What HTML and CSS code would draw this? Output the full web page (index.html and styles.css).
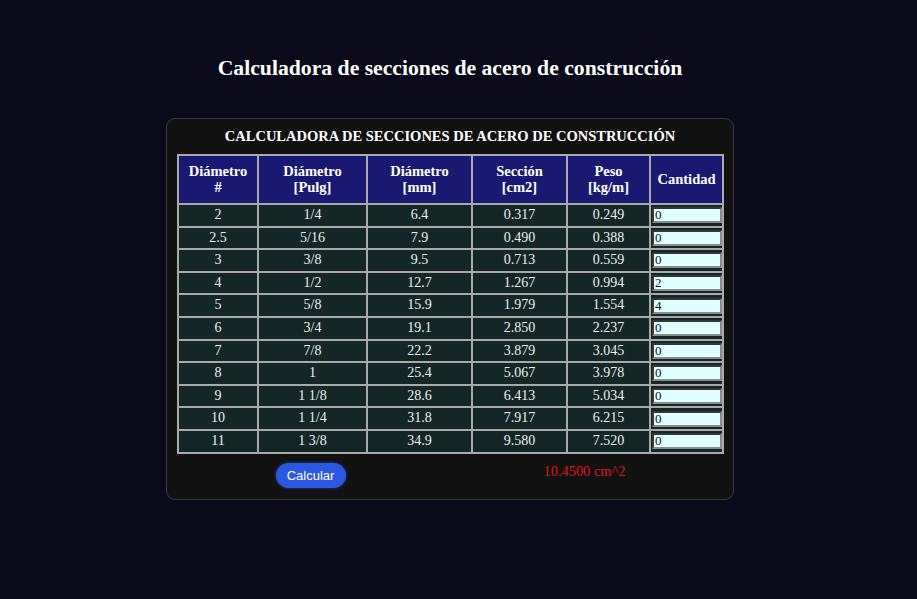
FILE: index.html
```html
<!DOCTYPE html>
<html lang="es">
<head>
<meta charset="utf-8">
<title>Calculadora de secciones de acero de construcción</title>
<link rel="stylesheet" href="styles.css">
</head>
<body>
<main class="page">
  <h1 class="page-title">Calculadora de secciones de acero de construcción</h1>
  <section class="card">
    <h2 class="card-title">CALCULADORA DE SECCIONES DE ACERO DE CONSTRUCCIÓN</h2>
    <table class="steel">
      <colgroup>
        <col class="c1"><col class="c2"><col class="c3"><col class="c4"><col class="c5"><col class="c6">
      </colgroup>
      <thead>
        <tr>
          <th>Diámetro<br>#</th>
          <th>Diámetro<br>[Pulg]</th>
          <th>Diámetro<br>[mm]</th>
          <th>Sección<br>[cm2]</th>
          <th>Peso<br>[kg/m]</th>
          <th>Cantidad</th>
        </tr>
      </thead>
      <tbody>
        <tr><td>2</td><td>1/4</td><td>6.4</td><td>0.317</td><td>0.249</td><td class="qty"><input class="qty-input" type="text" value="0"></td></tr>
        <tr><td>2.5</td><td>5/16</td><td>7.9</td><td>0.490</td><td>0.388</td><td class="qty"><input class="qty-input" type="text" value="0"></td></tr>
        <tr><td>3</td><td>3/8</td><td>9.5</td><td>0.713</td><td>0.559</td><td class="qty"><input class="qty-input" type="text" value="0"></td></tr>
        <tr><td>4</td><td>1/2</td><td>12.7</td><td>1.267</td><td>0.994</td><td class="qty"><input class="qty-input" type="text" value="2"></td></tr>
        <tr><td>5</td><td>5/8</td><td>15.9</td><td>1.979</td><td>1.554</td><td class="qty"><input class="qty-input" type="text" value="4"></td></tr>
        <tr><td>6</td><td>3/4</td><td>19.1</td><td>2.850</td><td>2.237</td><td class="qty"><input class="qty-input" type="text" value="0"></td></tr>
        <tr><td>7</td><td>7/8</td><td>22.2</td><td>3.879</td><td>3.045</td><td class="qty"><input class="qty-input" type="text" value="0"></td></tr>
        <tr><td>8</td><td>1</td><td>25.4</td><td>5.067</td><td>3.978</td><td class="qty"><input class="qty-input" type="text" value="0"></td></tr>
        <tr><td>9</td><td>1 1/8</td><td>28.6</td><td>6.413</td><td>5.034</td><td class="qty"><input class="qty-input" type="text" value="0"></td></tr>
        <tr><td>10</td><td>1 1/4</td><td>31.8</td><td>7.917</td><td>6.215</td><td class="qty"><input class="qty-input" type="text" value="0"></td></tr>
        <tr><td>11</td><td>1 3/8</td><td>34.9</td><td>9.580</td><td>7.520</td><td class="qty"><input class="qty-input" type="text" value="0"></td></tr>
      </tbody>
    </table>
    <div class="footer">
      <div class="footer-cell"><button class="btn" type="button">Calcular</button></div>
      <div class="footer-cell"><span class="result">10.4500 cm^2</span></div>
    </div>
  </section>
</main>
</body>
</html>
```

FILE: styles.css
```css
html, body {
  margin: 0;
  padding: 0;
  background: #0a0a1a;
}

body {
  font-family: "Liberation Serif", "Times New Roman", serif;
  color: #fff;
}

.page {
  width: 900px;
  display: flex;
  flex-direction: column;
  align-items: center;
  padding-top: 55px;
}

.page-title {
  margin: 0 0 37px;
  font-size: 21.7px;
  line-height: 26px;
  font-weight: bold;
  color: #fff;
}

.card {
  width: 546px;
  padding: 8px 10px 11px;
  background: #121212;
  border: 1px solid #3a3a3a;
  border-radius: 9px;
  display: flex;
  flex-direction: column;
  align-items: stretch;
}

.card-title {
  margin: 0 0 9px;
  text-align: center;
  font-size: 14.5px;
  line-height: 18px;
  font-weight: bold;
  color: #fff;
}

.steel {
  width: 545px;
  table-layout: fixed;
  border-collapse: collapse;
  border: 2px solid #a9a9a9;
}

.c1 { width: 80px; }
.c2 { width: 109px; }
.c3 { width: 105px; }
.c4 { width: 95px; }
.c5 { width: 83px; }
.c6 { width: 73px; }

.steel th,
.steel td {
  border: 2px solid #a9a9a9;
  text-align: center;
}

.steel th {
  background: #191972;
  color: #fff;
  font-size: 14.5px;
  line-height: 15.5px;
  font-weight: bold;
  padding: 8px 2px;
}

.steel td {
  background: #132727;
  color: #eeeeee;
  font-size: 14px;
  line-height: 16.6px;
  padding: 2px 2px;
}

.steel td.qty {
  padding: 0 1px;
  text-align: left;
}

.qty-input {
  display: block;
  box-sizing: border-box;
  width: 70px;
  height: 16px;
  margin: 0;
  padding: 0 1px;
  border: 2px inset #8a8a8a;
  background: #e0ffff;
  color: #111;
  font-family: "Liberation Serif", "Times New Roman", serif;
  font-size: 13px;
  line-height: normal;
}

.footer {
  display: flex;
  padding-top: 9px;
}

.footer-cell {
  flex: 1;
  display: flex;
  justify-content: center;
  align-items: flex-start;
}

.btn {
  width: 70px;
  height: 25px;
  margin-right: 6px;
  border: none;
  border-radius: 13px;
  background: #2c57e0;
  box-shadow: 0 0 3px rgba(60, 100, 255, 0.6);
  color: #fff;
  font-family: "Liberation Sans", Arial, sans-serif;
  font-size: 13px;
  padding: 0;
  cursor: pointer;
}

.result {
  margin-left: -4px;
  color: #e01515;
  font-size: 14.4px;
  line-height: 16px;
}
```
